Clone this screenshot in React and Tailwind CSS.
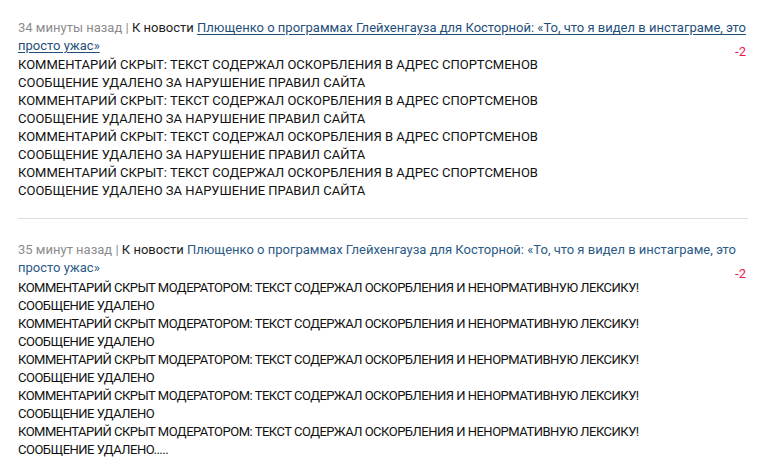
import React from 'react'

const firstBody = [
  'КОММЕНТАРИЙ СКРЫТ: ТЕКСТ СОДЕРЖАЛ ОСКОРБЛЕНИЯ В АДРЕС СПОРТСМЕНОВ',
  'СООБЩЕНИЕ УДАЛЕНО ЗА НАРУШЕНИЕ ПРАВИЛ САЙТА',
  'КОММЕНТАРИЙ СКРЫТ: ТЕКСТ СОДЕРЖАЛ ОСКОРБЛЕНИЯ В АДРЕС СПОРТСМЕНОВ',
  'СООБЩЕНИЕ УДАЛЕНО ЗА НАРУШЕНИЕ ПРАВИЛ САЙТА',
  'КОММЕНТАРИЙ СКРЫТ: ТЕКСТ СОДЕРЖАЛ ОСКОРБЛЕНИЯ В АДРЕС СПОРТСМЕНОВ',
  'СООБЩЕНИЕ УДАЛЕНО ЗА НАРУШЕНИЕ ПРАВИЛ САЙТА',
  'КОММЕНТАРИЙ СКРЫТ: ТЕКСТ СОДЕРЖАЛ ОСКОРБЛЕНИЯ В АДРЕС СПОРТСМЕНОВ',
  'СООБЩЕНИЕ УДАЛЕНО ЗА НАРУШЕНИЕ ПРАВИЛ САЙТА',
]

const secondBody = [
  'КОММЕНТАРИЙ СКРЫТ МОДЕРАТОРОМ: ТЕКСТ СОДЕРЖАЛ ОСКОРБЛЕНИЯ И НЕНОРМАТИВНУЮ ЛЕКСИКУ!',
  'СООБЩЕНИЕ УДАЛЕНО',
  'КОММЕНТАРИЙ СКРЫТ МОДЕРАТОРОМ: ТЕКСТ СОДЕРЖАЛ ОСКОРБЛЕНИЯ И НЕНОРМАТИВНУЮ ЛЕКСИКУ!',
  'СООБЩЕНИЕ УДАЛЕНО',
  'КОММЕНТАРИЙ СКРЫТ МОДЕРАТОРОМ: ТЕКСТ СОДЕРЖАЛ ОСКОРБЛЕНИЯ И НЕНОРМАТИВНУЮ ЛЕКСИКУ!',
  'СООБЩЕНИЕ УДАЛЕНО',
  'КОММЕНТАРИЙ СКРЫТ МОДЕРАТОРОМ: ТЕКСТ СОДЕРЖАЛ ОСКОРБЛЕНИЯ И НЕНОРМАТИВНУЮ ЛЕКСИКУ!',
  'СООБЩЕНИЕ УДАЛЕНО',
  'КОММЕНТАРИЙ СКРЫТ МОДЕРАТОРОМ: ТЕКСТ СОДЕРЖАЛ ОСКОРБЛЕНИЯ И НЕНОРМАТИВНУЮ ЛЕКСИКУ!',
  'СООБЩЕНИЕ УДАЛЕНО.....',
]

const title = 'Плющенко о программах Глейхенгауза для Косторной: «То, что я видел в инстаграме, это просто ужас»'

function Comment({ time, underlined, lines, condensed, top }) {
  return (
    <div className={'border-b border-[#dcdcdc] pb-[18px] ' + top}>
      <div className="leading-[18px]">
        <span className="text-[#8c8c8c]">{time} | </span>
        <span className="text-[#222]">К новости </span>
        <a className={underlined ? 'text-[#1f4f7a] underline underline-offset-2' : 'text-[#2b5a86]'}>{title}</a>
      </div>
      <div className="text-right text-[#f0194b] leading-[14px] -mt-[10px] pr-[2px]">-2</div>
      <div className={condensed ? 'text-[#111] leading-[18px] tracking-[-0.5px] -mt-[2px]' : 'text-[#111] leading-[18px] -mt-[3px]'}>
        {lines.map((l, i) => (
          <div key={i}>{l}</div>
        ))}
      </div>
    </div>
  )
}

export default function App() {
  return (
    <div className="w-[763px] h-[472px] bg-white overflow-hidden font-['Roboto',sans-serif] text-[13px]">
      <div className="mx-[18px] w-[730px]">
        <Comment top="pt-[19px]" time="34 минуты назад" underlined lines={firstBody} />
        <Comment top="pt-[22px]" time="35 минут назад" lines={secondBody} condensed />
      </div>
    </div>
  )
}
